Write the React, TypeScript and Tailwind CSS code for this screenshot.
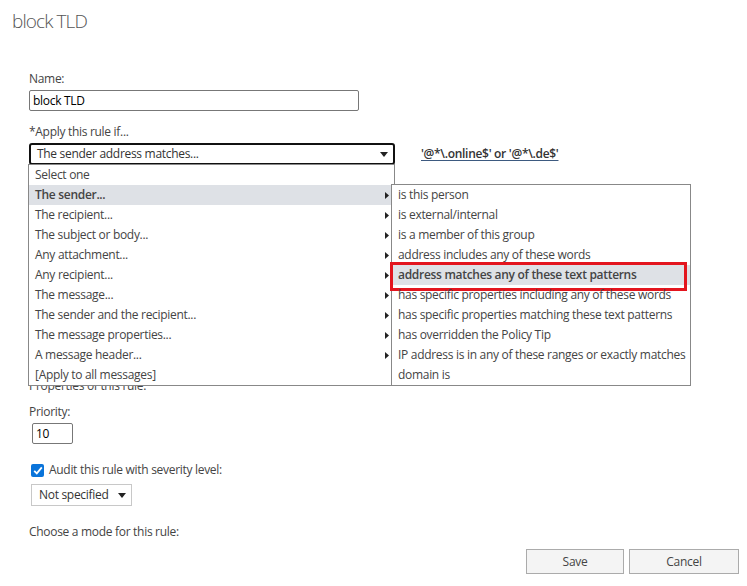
const font = { fontFamily: '"Open Sans", "Noto Sans", sans-serif' };

const conditions = [
  "Select one",
  "The sender...",
  "The recipient...",
  "The subject or body...",
  "Any attachment...",
  "Any recipient...",
  "The message...",
  "The sender and the recipient...",
  "The message properties...",
  "A message header...",
  "[Apply to all messages]",
];

const senderOptions = [
  "is this person",
  "is external/internal",
  "is a member of this group",
  "address includes any of these words",
  "address matches any of these text patterns",
  "has specific properties including any of these words",
  "has specific properties matching these text patterns",
  "has overridden the Policy Tip",
  "IP address is in any of these ranges or exactly matches",
  "domain is",
];

function DownArrow() {
  return (
    <svg width="8" height="5" viewBox="0 0 8 5" className="shrink-0">
      <path d="M0 0h8L4 5z" fill="#222" />
    </svg>
  );
}

function RightArrow() {
  return (
    <svg width="4" height="7" viewBox="0 0 4 7" className="shrink-0">
      <path d="M0 0l4 3.5L0 7z" fill="#222" />
    </svg>
  );
}

function SenderMenu() {
  return (
    <div className="absolute left-[362px] top-[19px] w-[300px] bg-white border border-[#888] z-20">
      {senderOptions.map((o, i) => (
        <div
          key={o}
          className={
            "h-[20px] flex items-center pl-[6px] text-[12px] whitespace-nowrap relative text-[#444] " +
            (i === 4 ? "bg-[#dee1e6] font-semibold" : "")
          }
        >
          {o}
          {i === 4 && (
            <div className="absolute -left-[2px] -top-[3px] w-[297px] h-[29px] border-[3px] border-[#e3151e]" />
          )}
        </div>
      ))}
    </div>
  );
}

function ConditionList() {
  return (
    <div className="absolute left-[-1px] top-[21px] w-[367px] bg-white border border-[#888] z-10">
      {conditions.map((c, i) => (
        <div
          key={c}
          className={
            "h-[20px] flex items-center justify-between pl-[6px] pr-[5px] text-[12px] text-[#444] " +
            (i === 1 ? "bg-[#dee1e6] font-semibold" : "")
          }
        >
          <span>{c}</span>
          {i > 0 && i < 10 && <RightArrow />}
        </div>
      ))}
      <SenderMenu />
    </div>
  );
}

export default function App() {
  return (
    <div
      className="w-[747px] h-[586px] bg-white text-[#444] relative overflow-hidden tracking-[-0.3px]"
      style={font}
    >
      <h1 className="pl-[12px] pt-[8px] text-[19px] font-light text-[#555] leading-[26px] tracking-[-0.9px]">
        block TLD
      </h1>

      <div className="pl-[29px] pt-[37px]">
        <div className="text-[12px] leading-[16px]">Name:</div>
        <div className="mt-[3px] w-[330px] h-[21px] border border-[#777] rounded-[2px] flex items-center px-[3px] text-[12px] text-black">
          block TLD
        </div>

        <div className="mt-[13px] text-[12px] leading-[16px]">*Apply this rule if...</div>
        <div className="mt-[3px] flex items-center">
          <div className="relative">
            <div className="w-[366px] h-[22px] border-2 border-[#111] rounded-[3px] flex items-center justify-between pl-[6px] pr-[5px] text-[12px] text-[#333]">
              <span>The sender address matches...</span>
              <DownArrow />
            </div>
            <ConditionList />
          </div>
          <a className="ml-[26px] text-[12px] font-semibold text-[#333] underline decoration-[#3d5a80] underline-offset-2">
            '@*\.online$' or '@*\.de$'
          </a>
        </div>

        <div className="h-[213px]" />

        <div className="text-[12px] leading-[16px]">Properties of this rule:</div>

        <div className="mt-[10px] text-[12px] leading-[16px]">Priority:</div>
        <div className="ml-[3px] mt-[3px] w-[41px] h-[21px] border border-[#777] rounded-[2px] flex items-center px-[3px] text-[12px] text-black">
          10
        </div>

        <div className="mt-[17px] ml-[2px] flex items-center gap-[5px]">
          <div className="w-[13px] h-[13px] rounded-[2px] bg-[#0a74da] flex items-center justify-center">
            <svg width="10" height="9" viewBox="0 0 10 9">
              <path d="M1.2 4.8l2.6 2.6L8.8 1.4" fill="none" stroke="white" strokeWidth="1.8" />
            </svg>
          </div>
          <span className="text-[12px]">Audit this rule with severity level:</span>
        </div>
        <div className="ml-[2px] mt-[5px] w-[101px] h-[22px] border border-[#c8c8c8] flex items-center justify-between pl-[7px] pr-[5px] text-[12px] text-[#333]">
          <span>Not specified</span>
          <DownArrow />
        </div>

        <div className="mt-[18px] text-[12px] leading-[16px]">Choose a mode for this rule:</div>
      </div>

      <div className="flex justify-end gap-[5px] pr-[8px] mt-[9px]">
        <button className="w-[98px] h-[25px] bg-[#f4f4f4] border border-[#ababab] text-[12px] text-[#444]">Save</button>
        <button className="w-[110px] h-[25px] bg-[#f4f4f4] border border-[#ababab] text-[12px] text-[#444]">Cancel</button>
      </div>
    </div>
  );
}
